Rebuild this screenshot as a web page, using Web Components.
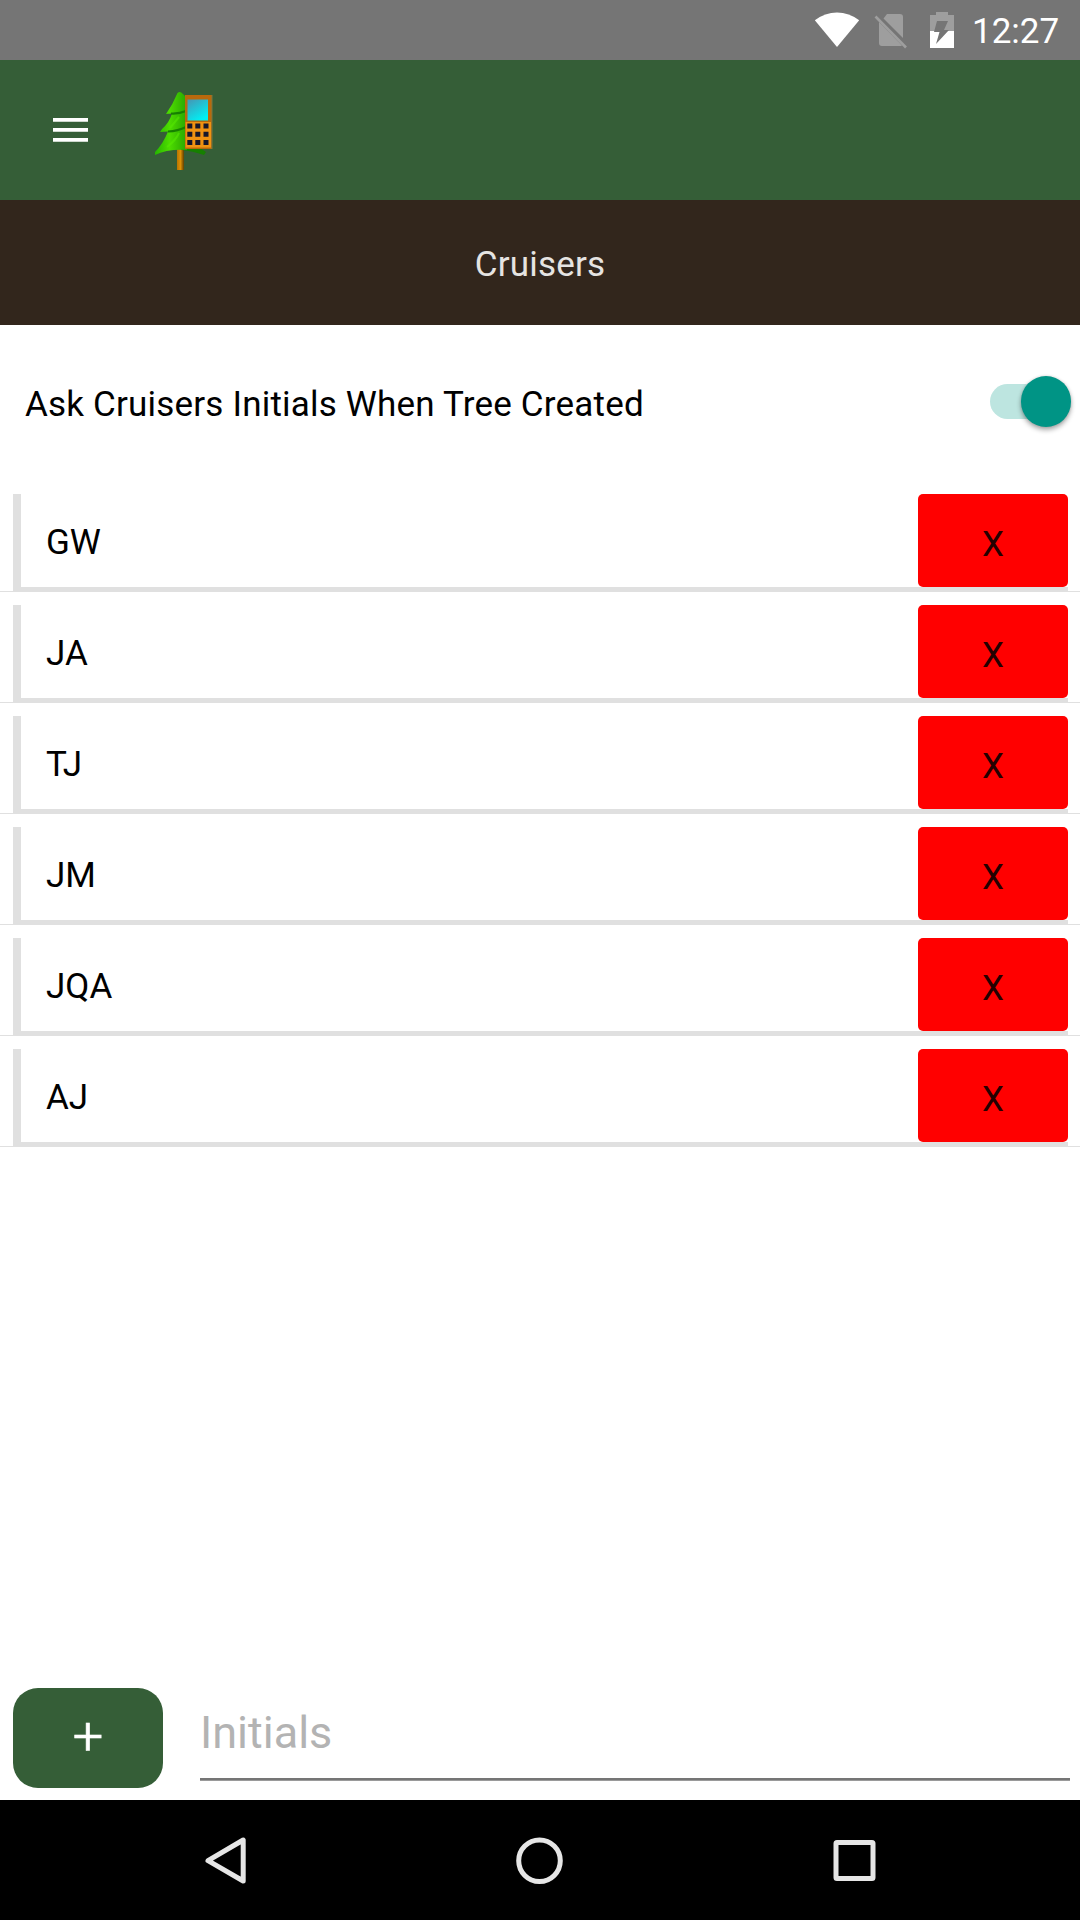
<!DOCTYPE html>
<html lang="en"><head><meta charset="utf-8"><title>Cruisers</title>
<style>html,body{margin:0;height:100%;background:#fff}body{font-family:Roboto,sans-serif;font-size:35px;line-height:41px;color:#000}</style></head>
<body><cruise-app></cruise-app>
<script>
const define=(name,html)=>customElements.define(name,class extends HTMLElement{
 constructor(){super();this.attachShadow({mode:'open'}).innerHTML=html}
});
define('status-bar',`<style>:host{display:flex;height:60px;background:#757575;color:#fff}svg{width:160px;height:60px;margin-left:800px}span{margin:11px 0 0 12px;white-space:nowrap}</style>
<svg viewBox="0 0 160 60"><path fill="#fff" d="M37 47 14.8 20.3Q25 12.5 37 12.5T59.2 20.3Z"/>
<path fill="#9e9e9e" d="M87 14H100q3 0 3 3V38L83.5 18.5ZM79 22 102 45.5Q101 46 100 46H82q-3 0-3-3Z"/><path d="m75.5 16.5 30.5 31" stroke="#9e9e9e" stroke-width="2.6"/>
<path fill="#9e9e9e" d="M136 12h12v3h6v16h-24V15h6Z"/><path fill="#fff" d="M130 31h24v17h-24z"/><path fill="#757575" d="M137 21h11l-4 9h5L136 44l3.5-12H134Z"/></svg><span>12:27</span>`);
define('app-logo',`<style>:host{display:block;width:90px;height:100px}svg{display:block;filter:blur(.65px)}</style>
<svg width="90" height="100" viewBox="0 0 90 100"><defs>
<linearGradient id="l"><stop offset="0" stop-color="#25b400"/><stop offset=".45" stop-color="#4ddc00"/><stop offset="1" stop-color="#28a600"/></linearGradient>
<linearGradient id="s" x2=".6" y2="1"><stop stop-color="#4695b4"/><stop offset="1" stop-color="#00f0f4"/></linearGradient>
<linearGradient id="t"><stop stop-color="#b87400"/><stop offset=".5" stop-color="#dc9005"/><stop offset="1" stop-color="#604000"/></linearGradient></defs>
<path fill="url(#t)" d="M37 68h7v22h-7z"/>
<path fill="#168000" d="M36 66H57L66 72 64 75Q52 71 42 70Z"/>
<path fill="url(#l)" d="M37.5 13Q40 10.5 43 14L47 18V70Q27 69 15 75L15 72Q23 64 28 51.5L20 52 22 49Q29 43 32 33.5L26 34Q33 24 37.5 13Z"/>
<path d="M31 33.5Q39 34 46 31M28 51.5Q38 51 46 47" stroke="#168000" stroke-width="2.2" fill="none"/>
<path d="M27 67Q36 60 39 53M30 48 39 37" stroke="#55e900" stroke-width="2" fill="none" opacity=".55"/>
<path fill="#b8690c" d="M45 15H72V69H45Z"/><path fill="#f09212" d="M45.6 42H71V67.6H45.6Z"/><path d="M72 15V69" stroke="#757844" stroke-width="1"/><path fill="url(#s)" d="M47.5 19.5h20.5v21H47.5z"/>
<g fill="#17172b"><path d="M47.3 43.5h5v5h-5zM55.3 43.5h5v5h-5zM63.5 43.5h5v5h-5zM47.3 51.8h5v5h-5zM55.3 51.8h5v5h-5zM63.5 51.8h5v5h-5zM47.3 60.1h5v5h-5zM55.3 60.1h5v5h-5zM63.5 60.1h5v5h-5z"/></g></svg>`);
define('app-toolbar',`<style>:host{display:flex;height:140px;background:#355e37}svg{width:35px;height:140px;margin-left:53px}app-logo{margin:20px 0 0 52px}</style>
<svg viewBox="0 0 35 140"><path fill="#fff" d="M0 58h35v3.7H0zM0 68h35v3.7H0zM0 78h35v3.7H0z"/></svg><app-logo></app-logo>`);
define('page-title',`<style>:host{display:flex;height:125px;background:#32261c;color:#e6e4e2;justify-content:center}span{margin-top:44px;letter-spacing:.18px}</style><span><slot></slot></span>`);
define('toggle-switch',`<style>:host{display:flex;width:82px;height:51px;align-items:center}i{width:56px;height:35px;border-radius:18px;background:#bde5e0}b{width:50.6px;height:50.6px;border-radius:50%;background:#009485;margin-left:-25.3px;box-shadow:0 3px 5px #0005,0 0 3px #0002}</style><i></i><b></b>`);
define('setting-row',`<style>:host{display:flex;height:156px;justify-content:space-between;box-sizing:border-box;padding:0 8px 0 25px}span{margin-top:59px;letter-spacing:.19px;white-space:nowrap}toggle-switch{margin-top:51px}</style><span><slot></slot></span><toggle-switch></toggle-switch>`);
define('cruiser-row',`<style>:host{display:block;height:111px;box-sizing:border-box;padding:13px 12px 0 13px;background:linear-gradient(#e0e0e0,#e0e0e0) bottom/100% 1px no-repeat}.r{display:flex;justify-content:space-between;box-sizing:border-box;height:98px;background:#fff;box-shadow:inset 8px 0 #e0e0e0,inset 0 -5px #e0e0e0}span{margin:28px 0 0 33px}button{font:inherit;color:#240000;width:150px;height:93px;border:0;border-radius:5px;background:red;padding:8px 0 0}</style><div class="r"><span><slot></slot></span><button>X</button></div>`);
define('add-bar',`<style>:host{display:flex;height:112px;align-items:flex-start;padding-right:10px}button{width:150px;height:100px;margin-left:13px;border:0;border-radius:25px;background:#355e37;color:#fff;font:300 54px/58px Roboto,sans-serif;-webkit-text-stroke:.7px #fff;padding:0 0 2px}.f{flex:1;height:93px;margin-left:37px;box-sizing:border-box;background:linear-gradient(#757575 2px,#9a9a9a 2px) bottom/100% 3px no-repeat}span{display:block;font-size:45px;line-height:53px;color:#b3b3b3;padding-top:18px}</style><button>+</button><div class="f"><span><slot></slot></span></div>`);
define('nav-bar',`<style>:host{display:block;height:120px;background:#000}svg{display:block}</style><svg width="1080" height="120" fill="none" stroke="#e6e6e6" stroke-width="5" stroke-linejoin="round"><path d="M243.2 40V81L208 60.7Z"/><circle cx="539.5" cy="60.7" r="20.8"/><rect x="836" y="42.5" width="37" height="36" rx="1"/></svg>`);
define('cruise-app',`<style>:host{display:flex;flex-direction:column;height:1920px;width:1080px;overflow:hidden}main{flex:1}</style>
<status-bar></status-bar><app-toolbar></app-toolbar><page-title>Cruisers</page-title><setting-row>Ask Cruisers Initials When Tree Created</setting-row>
<main>${['GW','JA','TJ','JM','JQA','AJ'].map(n=>`<cruiser-row>${n}</cruiser-row>`).join('')}</main><add-bar>Initials</add-bar><nav-bar></nav-bar>`);
</script></body></html>
